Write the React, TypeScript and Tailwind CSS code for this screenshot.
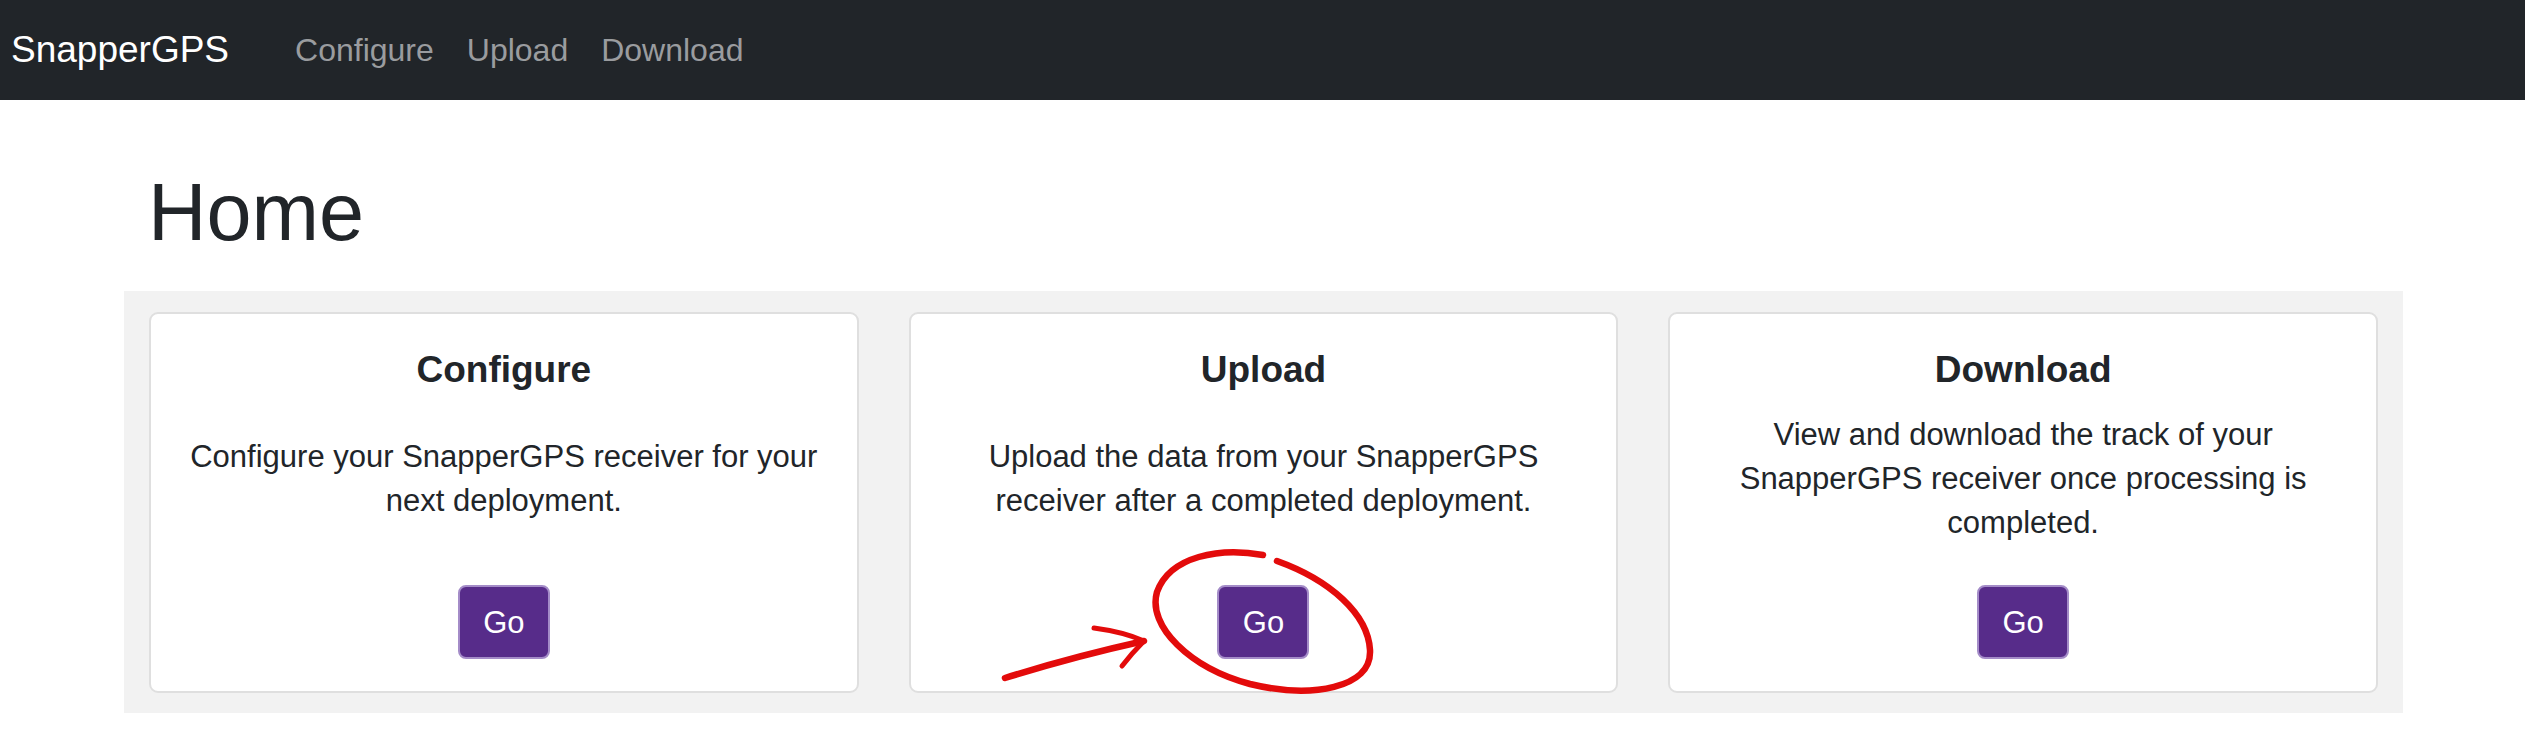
import React from "react"

const cards = [
  {
    title: "Configure",
    text: "Configure your SnapperGPS receiver for your next deployment.",
  },
  {
    title: "Upload",
    text: "Upload the data from your SnapperGPS receiver after a completed deployment.",
  },
  {
    title: "Download",
    text: "View and download the track of your SnapperGPS receiver once processing is completed.",
  },
]

function Card({ title, text }: { title: string; text: string }) {
  return (
    <div className="h-[381px] bg-white border-2 border-[#dfdfdf] rounded-[9px] px-[31px] pt-[32px] pb-[32px] flex flex-col items-center text-center">
      <h5 className="text-[37px] leading-[48px] font-bold text-[#212529]">{title}</h5>
      <div className="flex-1 mb-[21px] flex items-center justify-center">
        <p className="text-[31px] leading-[44px] text-[#212529]">{text}</p>
      </div>
      <button className="w-[92px] h-[74px] shrink-0 rounded-[8px] border-2 border-[#a48cc8] bg-[#572c8a] text-white text-[31px] leading-none">
        Go
      </button>
    </div>
  )
}

export default function App() {
  return (
    <div className="relative w-[2525px] h-[740px] overflow-hidden bg-white font-['Liberation_Sans',Arial,sans-serif]">
      {/* Navbar */}
      <nav className="h-[100px] bg-[#212529] flex items-center pl-[11px]">
        <a className="text-white text-[37px] leading-[54px]">SnapperGPS</a>
        <div className="ml-[66px] flex gap-[33px] text-[32px] leading-[48px] text-[#9a9c9f]">
          <a>Configure</a>
          <a>Upload</a>
          <a>Download</a>
        </div>
      </nav>

      <main className="ml-[124px] w-[2279px]">
        <h1 className="pl-[24px] mt-[65px] mb-[31px] text-[81px] leading-[95px] text-[#212529]">Home</h1>

        <div className="bg-[#f2f2f2] pt-[21px] pb-[20px] px-[25px] grid grid-cols-3 gap-[50px]">
          {cards.map((card) => (
            <Card key={card.title} title={card.title} text={card.text} />
          ))}
        </div>
      </main>

      {/* red hand-drawn annotation */}
      <svg
        className="absolute inset-0 pointer-events-none"
        width="2525"
        height="740"
        viewBox="0 0 2525 740"
        fill="none"
      >
        <path
          d="M1263 555 C1220 547, 1170 556, 1157 592 C1147 626, 1190 668, 1250 684 C1312 699, 1372 688, 1370 650 C1368 614, 1330 580, 1277 561"
          stroke="#e30b0b"
          strokeWidth="6.5"
          strokeLinecap="round"
        />
        <path d="M1005 678 Q1072 657 1144 641" stroke="#e30b0b" strokeWidth="6.5" strokeLinecap="round" />
        <path d="M1094 628 Q1124 632 1144 641 Q1132 653 1122 666" stroke="#e30b0b" strokeWidth="5" strokeLinecap="round" strokeLinejoin="round" />
      </svg>
    </div>
  )
}
